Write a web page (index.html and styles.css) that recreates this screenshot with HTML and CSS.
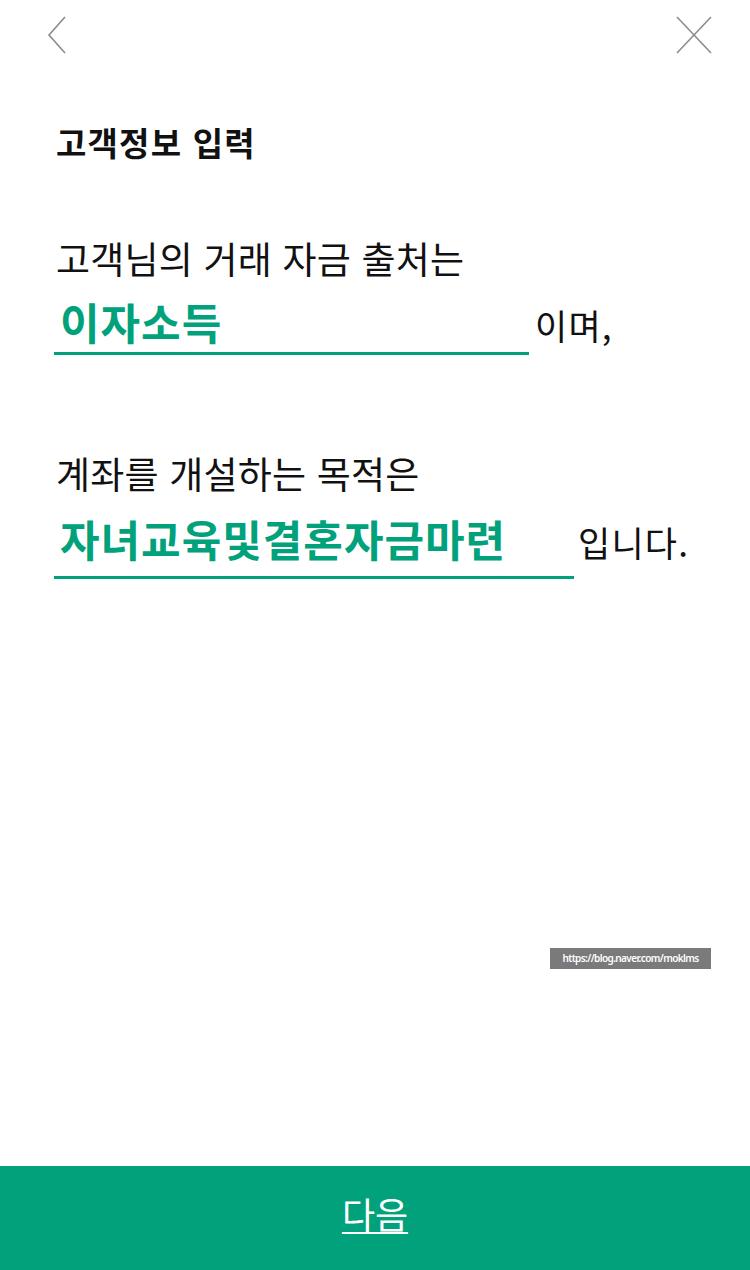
FILE: index.html
```html
<!DOCTYPE html>
<html lang="ko">
<head>
  <meta charset="UTF-8" />
  <title>고객정보 입력</title>
  <link rel="stylesheet" href="styles.css">
</head>
<body>
  <div class="page">
    <header class="topbar">
      <button class="icon-btn" aria-label="뒤로">
        <svg width="20" height="38" viewBox="0 0 20 38">
          <polyline points="18,1 2,19 18,37" fill="none" stroke="#8c8c8c" stroke-width="1.6" />
        </svg>
      </button>
      <button class="icon-btn" aria-label="닫기">
        <svg width="36" height="38" viewBox="0 0 36 38">
          <line x1="1" y1="1" x2="35" y2="37" stroke="#8c8c8c" stroke-width="1.6" />
          <line x1="35" y1="1" x2="1" y2="37" stroke="#8c8c8c" stroke-width="1.6" />
        </svg>
      </button>
    </header>

    <main class="content">
      <h1 class="title">고객정보 입력</h1>

      <section class="question">
        <p class="q-text">고객님의 거래 자금 출처는</p>
        <div class="answer-row">
          <div class="answer answer-short">이자소득</div>
          <span class="tail">이며,</span>
        </div>
      </section>

      <section class="question">
        <p class="q-text">계좌를 개설하는 목적은</p>
        <div class="answer-row">
          <div class="answer answer-long">자녀교육및결혼자금마련</div>
          <span class="tail tail-end">입니다.</span>
        </div>
      </section>

      <div class="stamp">https://blog.naver.com/moklms</div>
    </main>

    <button class="next-btn"><span>다음</span></button>
  </div>
</body>
</html>
```

FILE: styles.css
```css
* { box-sizing: border-box; }
body {
  margin: 0;
  background: #fff;
  font-family: "Noto Sans CJK KR", "Noto Sans", sans-serif;
  color: #111;
}
.page {
  width: 750px;
  height: 1270px;
  display: flex;
  flex-direction: column;
}
.topbar {
  height: 70px;
  display: flex;
  justify-content: space-between;
  align-items: flex-start;
  padding: 16px 38px 0 47px;
}
.icon-btn {
  background: none;
  border: none;
  padding: 0;
  cursor: pointer;
  line-height: 0;
}
.content {
  flex: 1;
  padding: 0 0 0 54px;
  display: flex;
  flex-direction: column;
}
.title {
  margin: 52px 0 0 2px;
  font-size: 33px;
  line-height: 40px;
  font-weight: 700;
  letter-spacing: 1.2px;
}
.question {
  margin-top: 74px;
}
.question + .question {
  margin-top: 96px;
}
.q-text {
  margin: 0 0 0 2px;
  font-size: 37px;
  line-height: 44px;
  letter-spacing: 0.2px;
}
.answer-row {
  display: flex;
  align-items: baseline;
  margin-top: 16px;
}
.question + .question .answer-row {
  margin-top: 18px;
}
.answer {
  color: #01a27b;
  font-size: 43px;
  line-height: 50px;
  font-weight: 700;
  letter-spacing: 1px;
  padding: 0 0 6px 6px;
  border-bottom: 3px solid #01a27b;
}
.answer-short { width: 475px; }
.answer-long {
  width: 520px;
  padding-bottom: 13px;
}
.tail {
  font-size: 35px;
  line-height: 44px;
  margin-left: 6px;
  letter-spacing: 1.2px;
}
.tail-end { margin-left: 4px; }
.stamp {
  align-self: flex-end;
  margin: auto 39px 197px 0;
  background: #7a7a7a;
  color: #fff;
  font-family: "Noto Sans", sans-serif;
  font-size: 10px;
  font-weight: 600;
  letter-spacing: -0.6px;
  width: 161px;
  height: 21px;
  line-height: 21px;
  text-align: center;
}
.next-btn {
  height: 104px;
  border: none;
  padding: 0 0 10px;
  background: #01a27b;
  color: #fff;
  font-family: inherit;
  font-size: 36px;
  cursor: pointer;
}
.next-btn span {
  text-decoration: underline;
  text-decoration-thickness: 1.5px;
  text-underline-offset: 3px;
}
```
